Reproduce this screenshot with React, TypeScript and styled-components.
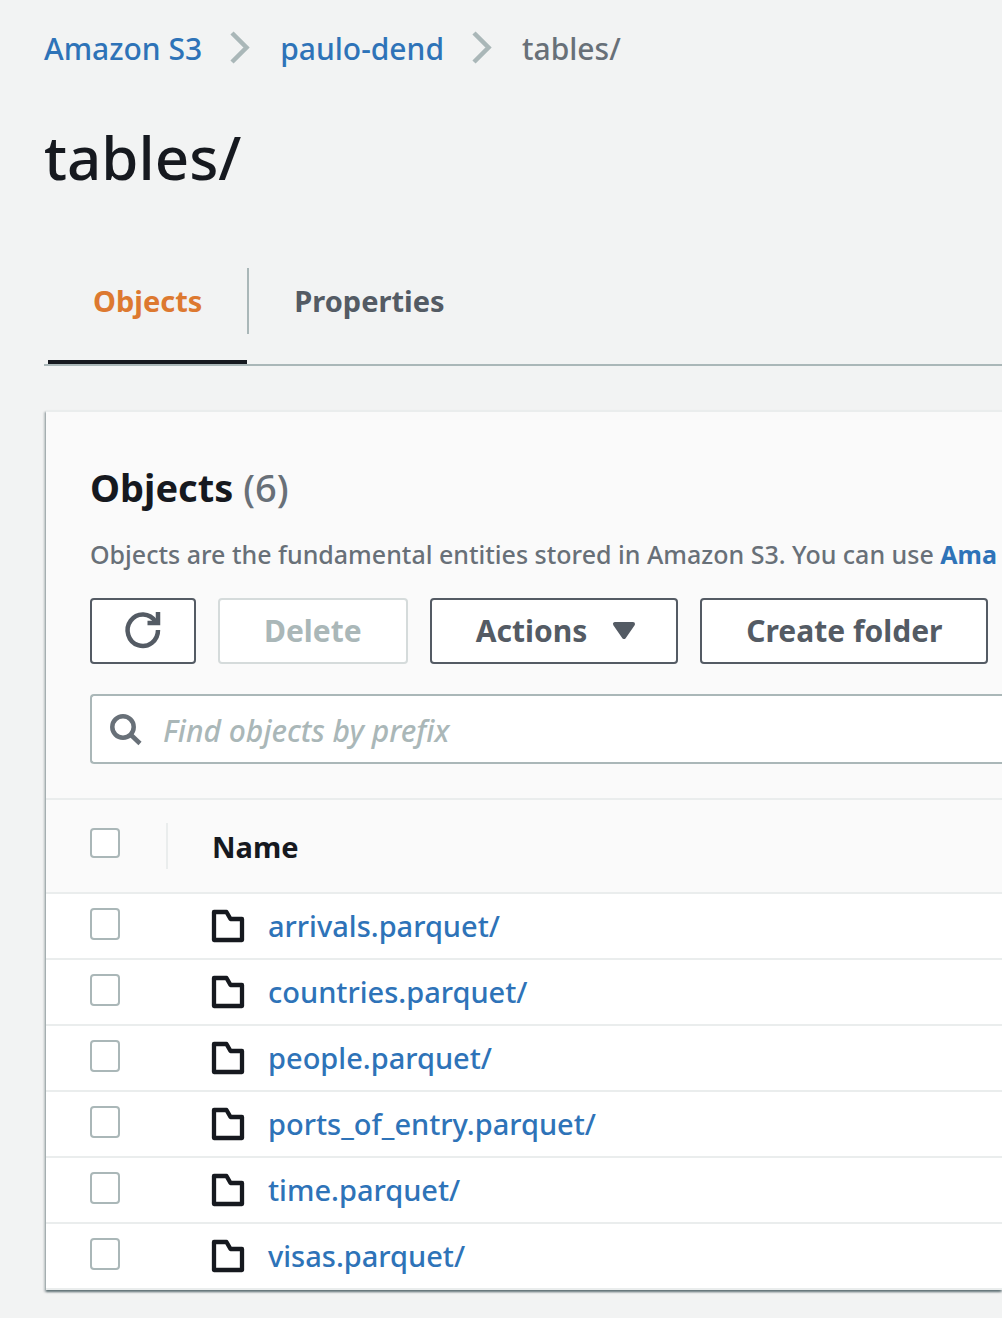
import React from "react";
import styled, { createGlobalStyle } from "styled-components";

const color = {
  link: "#2e73b8",
  ink: "#16191f",
  text: "#545b64",
  muted: "#687078",
  line: "#aab7b8",
  faint: "#eaeded",
};

const GlobalStyle = createGlobalStyle`
  *, *::before, *::after { box-sizing: border-box; }
  body {
    margin: 0;
    background: #f2f3f3;
    color: ${color.ink};
    font-family: "Noto Sans", "Open Sans", sans-serif;
    font-size: 30px;
    font-weight: 500;
    line-height: 44px;
    overflow-x: hidden;
  }
  button, input { font: inherit; margin: 0; }
`;

const Page = styled.main`
  padding: 27px 0 28px 44px;
`;

const Crumbs = styled.ol`
  display: flex;
  align-items: center;
  gap: 30px;
  margin: 0;
  padding: 0;
  list-style: none;
  white-space: nowrap;
`;

const Crumb = styled.li`
  display: flex;
  align-items: center;
  gap: 28px;
  color: ${color.muted};
`;

const TextLink = styled.a<{ $strong?: boolean }>`
  color: ${color.link};
  font-weight: ${(p) => (p.$strong ? 700 : 500)};
  text-decoration: none;
`;

const Title = styled.h1`
  margin: 42px 0 65px;
  font-size: 60px;
  line-height: 88px;
  font-weight: 500;
`;

const Tabs = styled.div`
  display: flex;
  height: 100px;
  padding-left: 4px;
  border-bottom: 2px solid ${color.line};
`;

const Tab = styled.button<{ $active?: boolean }>`
  display: flex;
  align-items: flex-start;
  height: 98px;
  padding: 13px 45px 0;
  border: 0;
  border-bottom: 4px solid ${(p) => (p.$active ? color.ink : "transparent")};
  background: none;
  color: ${(p) => (p.$active ? "#dd7930" : color.text)};
  font-size: 29px;
  font-weight: 700;
`;

const TabDivider = styled.span`
  width: 2px;
  height: 66px;
  margin-top: 2px;
  background: ${color.line};
`;

const Card = styled.section`
  margin: 44px 0 0 2px;
  border-top: 2px solid ${color.faint};
  background: #fff;
  box-shadow: 0 2px 2px rgba(0, 28, 36, 0.5), -2px 2px 2px rgba(0, 28, 36, 0.2);
`;

const CardHeader = styled.header`
  padding: 49px 0 34px 44px;
  background: #fafafa;
  border-bottom: 2px solid ${color.faint};
`;

const Heading = styled.h2`
  margin: 0;
  font-size: 38px;
  line-height: 52px;
  font-weight: 700;
`;

const Count = styled.span`
  color: ${color.muted};
  font-weight: 500;
`;

const Description = styled.p`
  margin: 22px 0 25px;
  color: ${color.muted};
  font-size: 25px;
  line-height: 38px;
  white-space: nowrap;
`;

const Toolbar = styled.div`
  display: flex;
  gap: 22px;
`;

const Button = styled.button<{ $icon?: boolean }>`
  display: flex;
  align-items: center;
  justify-content: center;
  gap: 25px;
  height: 66px;
  padding: 0 ${(p) => (p.$icon ? 32 : 44)}px;
  border: 2px solid ${color.text};
  border-radius: 4px;
  background: #fff;
  color: ${color.text};
  font-weight: 700;
  white-space: nowrap;

  &:disabled {
    border-color: #d5dbdb;
    color: ${color.line};
  }
`;

const Search = styled.label`
  display: flex;
  align-items: center;
  gap: 20px;
  height: 70px;
  margin-top: 30px;
  padding-left: 17px;
  border: 2px solid ${color.line};
  border-right: 0;
  border-radius: 4px 0 0 4px;
  background: #fff;
`;

const SearchInput = styled.input`
  flex: 1;
  min-width: 0;
  height: 60px;
  padding: 2px 0 0;
  border: 0;
  outline: 0;
  background: none;
  color: ${color.ink};

  &::placeholder {
    color: ${color.line};
    font-style: italic;
    opacity: 1;
  }
`;

const Table = styled.table`
  width: 100%;
  table-layout: fixed;
  border-collapse: separate;
  border-spacing: 0;
  font-size: 29px;
`;

const HeadCell = styled.th<{ $select?: boolean }>`
  width: ${(p) => (p.$select ? "122px" : "auto")};
  height: 94px;
  padding: ${(p) => (p.$select ? 0 : 2)}px 0 0 44px;
  border-bottom: 2px solid ${color.faint};
  background: #fafafa;
  font-weight: 700;
  text-align: left;
`;

const SelectHead = styled.div`
  display: flex;
  align-items: center;
  height: 46px;
  padding-bottom: 6px;
  border-right: 2px solid ${color.faint};
`;

const Cell = styled.td<{ $select?: boolean }>`
  height: 66px;
  padding: 0 0 ${(p) => (p.$select ? 4 : 0)}px 44px;
  border-bottom: 2px solid ${color.faint};
`;

const Checkbox = styled.input<{ $tall?: boolean }>`
  appearance: none;
  display: block;
  width: 30px;
  height: ${(p) => (p.$tall ? 32 : 30)}px;
  border: 2px solid ${color.line};
  border-radius: 4px;
  background: #fff;

  &:checked {
    background: ${color.link};
  }
`;

const Name = styled.div`
  display: flex;
  align-items: center;
  gap: 24px;
`;

const Glyph = styled.svg`
  display: block;
  flex: none;
  fill: none;
  stroke: currentColor;
  overflow: visible;
`;

const Chevron = () => (
  <Glyph width="20" height="34" viewBox="0 1 20 34" strokeWidth="4.500" color={color.line} aria-hidden>
    <path d="M2 2 16.500 16.500 2 31" />
  </Glyph>
);

const Refresh = () => (
  <Glyph width="38" height="38" viewBox="0 0 38 38" strokeWidth="4.500" aria-hidden>
    <path d="M34 18A15.200 15.800 0 1 1 31.500 9.500" />
    <path d="M34 0V11H23.500" />
  </Glyph>
);

const Caret = () => (
  <Glyph width="20" height="20" viewBox="0 0 20 20" strokeWidth="4" strokeLinejoin="round" aria-hidden>
    <path d="M3 3H21L12 16Z" fill="currentColor" />
  </Glyph>
);

const Magnifier = () => (
  <Glyph width="34" height="34" viewBox="0 0 34 34" strokeWidth="4.500" color={color.muted} aria-hidden>
    <circle cx="14" cy="15" r="10.700" />
    <path d="M21.500 22.500 31 31.500" />
  </Glyph>
);

const Folder = () => (
  <Glyph width="32" height="32" viewBox="0 0 32 32" strokeWidth="4.300" strokeLinejoin="round" aria-hidden>
    <path d="M2 2H14.500L18.500 9H30V30H2Z" />
  </Glyph>
);

const folders = [
  "arrivals.parquet/",
  "countries.parquet/",
  "people.parquet/",
  "ports_of_entry.parquet/",
  "time.parquet/",
  "visas.parquet/",
];

export default function App() {
  return (
    <>
      <GlobalStyle />
      <Page>
        <nav aria-label="Breadcrumb">
          <Crumbs>
            <Crumb>
              <TextLink href="#">Amazon S3</TextLink>
              <Chevron />
            </Crumb>
            <Crumb>
              <TextLink href="#">paulo-dend</TextLink>
              <Chevron />
            </Crumb>
            <Crumb aria-current="page">tables/</Crumb>
          </Crumbs>
        </nav>
        <Title>tables/</Title>
        <Tabs role="tablist">
          <Tab role="tab" aria-selected $active>Objects</Tab>
          <TabDivider />
          <Tab role="tab" aria-selected={false}>Properties</Tab>
        </Tabs>
        <Card>
          <CardHeader>
            <Heading>
              Objects <Count>({folders.length})</Count>
            </Heading>
            <Description>
              Objects are the fundamental entities stored in Amazon S3. You can use{" "}
              <TextLink href="#" $strong>Ama</TextLink>
            </Description>
            <Toolbar>
              <Button $icon aria-label="Refresh"><Refresh /></Button>
              <Button disabled>Delete</Button>
              <Button>Actions <Caret /></Button>
              <Button>Create folder</Button>
            </Toolbar>
            <Search>
              <Magnifier />
              <SearchInput type="text" placeholder="Find objects by prefix" aria-label="Find objects by prefix" />
            </Search>
          </CardHeader>
          <Table>
            <thead>
              <tr>
                <HeadCell $select>
                  <SelectHead>
                    <Checkbox type="checkbox" aria-label="Select all objects" />
                  </SelectHead>
                </HeadCell>
                <HeadCell>Name</HeadCell>
              </tr>
            </thead>
            <tbody>
              {folders.map((name) => (
                <tr key={name}>
                  <Cell $select>
                    <Checkbox $tall type="checkbox" aria-label={`Select ${name}`} />
                  </Cell>
                  <Cell>
                    <Name>
                      <Folder />
                      <TextLink href="#">{name}</TextLink>
                    </Name>
                  </Cell>
                </tr>
              ))}
            </tbody>
          </Table>
        </Card>
      </Page>
    </>
  );
}
